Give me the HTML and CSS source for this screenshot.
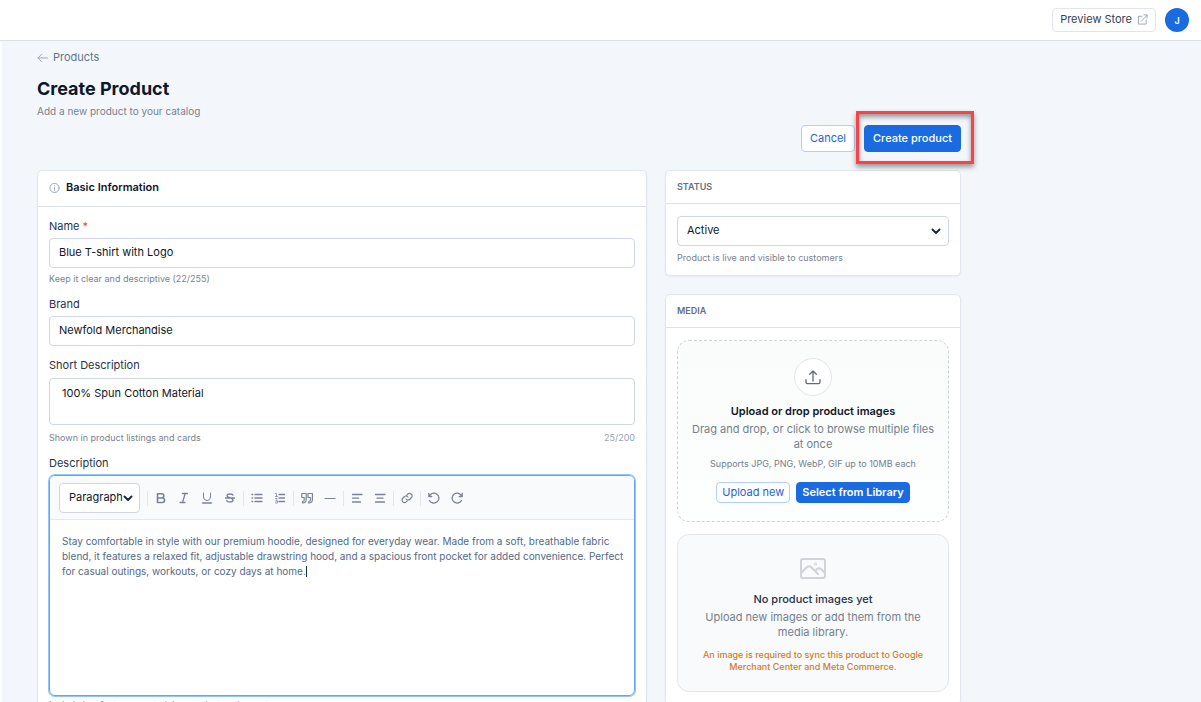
FILE: index.html
```html
<!DOCTYPE html>
<html lang="en">
<head>
<meta charset="utf-8">
<meta name="viewport" content="width=device-width, initial-scale=1">
<title>Create Product</title>
<link rel="stylesheet" href="styles.css">
</head>
<body>
<div class="app">
  <header class="topbar">
    <a class="preview" href="#">Preview Store
      <svg class="icon-sm" viewBox="0 0 24 24"><path d="M11 5H3v17h17v-9M9 16 22 3M15 2h7v7"/></svg>
    </a>
    <button class="avatar" type="button" aria-label="Account">J</button>
  </header>

  <main class="page">
    <div class="content">
      <a class="back" href="#">
        <svg class="icon-sm" viewBox="0 0 24 24"><path d="M23 13H2M10 5l-8 8 8 8"/></svg>
        Products
      </a>
      <h1 class="title">Create Product</h1>
      <p class="subtitle">Add a new product to your catalog</p>

      <div class="actions">
        <button class="btn btn-outline" type="button">Cancel</button>
        <span class="highlight"><button class="btn btn-primary" type="submit">Create product</button></span>
      </div>

      <div class="columns">
        <section class="card">
          <div class="card-head card-head-main">
            <svg class="icon-sm" viewBox="0 0 24 24"><circle cx="12" cy="13" r="10"/><path d="M12 12v6M12 8v.500"/></svg>
            <h2 class="card-title">Basic Information</h2>
          </div>
          <div class="card-body">
            <div class="field">
              <label class="label" for="name">Name <span class="required">*</span></label>
              <input class="control" id="name" type="text" value="Blue T-shirt with Logo">
              <p class="hint">Keep it clear and descriptive (22/255)</p>
            </div>
            <div class="field">
              <label class="label" for="brand">Brand</label>
              <input class="control" id="brand" type="text" value="Newfold Merchandise">
            </div>
            <div class="field">
              <label class="label" for="short">Short Description</label>
              <textarea class="control control-area" id="short">100% Spun Cotton Material</textarea>
              <div class="hint hint-row"><span>Shown in product listings and cards</span><span class="count">25/200</span></div>
            </div>
            <div class="field">
              <span class="label" id="description-label">Description</span>
              <div class="editor">
                <div class="toolbar">
                  <div class="select-wrap select-format">
                    <select class="control select" aria-label="Text style"><option>Paragraph</option></select>
                    <svg class="chevron" viewBox="0 0 10 10"><path d="M1.500 3.500 5 7l3.500-3.500"/></svg>
                  </div>
                  <span class="sep"></span>
                  <button class="tool" type="button" aria-label="Bold"><svg viewBox="0 0 12 12"><path stroke-width="1.600" d="M2.500 1.700h4.200a2.100 2.100 0 0 1 0 4.300H2.500zM2.500 6h4.800a2.200 2.200 0 0 1 0 4.500H2.500z"/></svg></button>
                  <button class="tool" type="button" aria-label="Italic"><svg viewBox="0 0 12 12"><path stroke-width="1.300" d="M4.500 1.500h5M2 10.500h5M7.200 1.500l-2.700 9"/></svg></button>
                  <button class="tool" type="button" aria-label="Underline"><svg viewBox="0 0 12 12"><path d="M2.500 1v4a3.500 3.500 0 0 0 7 0V1"/><path stroke-width="1.300" d="M1.500 11h9"/></svg></button>
                  <button class="tool" type="button" aria-label="Strikethrough"><svg viewBox="0 0 12 12"><path stroke-width="1.300" d="M9 3.200C8.500 1.500 3 1.500 3 3.800 3 6 9 5.500 9 8.200 9 10.500 3 10.500 2.800 8.500M1.500 6h9"/></svg></button>
                  <span class="sep"></span>
                  <button class="tool" type="button" aria-label="Bulleted list"><svg viewBox="0 0 12 12"><path stroke-width="1.400" d="M4 2.500h7M4 6h7M4 9.500h7M1 2.500h.6M1 6h.6M1 9.500h.6"/></svg></button>
                  <button class="tool" type="button" aria-label="Numbered list"><svg viewBox="0 0 12 12"><path stroke-width="1.300" d="M5 2.500h5.500M5 6h5.500M5 9.500h5.500"/><path stroke-width=".8" d="M1.500 1.500h1v3M1.500 4.500h2M1.500 6.500h1.500v1.200L1.500 9h2M1.500 11h2V9.500"/></svg></button>
                  <span class="sep"></span>
                  <button class="tool" type="button" aria-label="Quote"><svg viewBox="0 0 12 12"><path stroke-width="1.200" d="M5.200 1.500H.8v4h2.400V8c0 1-.6 1.500-1.700 1.500V11c2.500 0 3.700-1.200 3.700-3.500zM11.400 1.500H7v4h2.400V8c0 1-.6 1.500-1.700 1.500V11c2.500 0 3.700-1.200 3.700-3.500z"/></svg></button>
                  <button class="tool" type="button" aria-label="Divider"><svg viewBox="0 0 12 12"><path stroke-width="1.200" d="M1 6.500h10"/></svg></button>
                  <span class="sep"></span>
                  <button class="tool" type="button" aria-label="Align left"><svg viewBox="0 0 12 12"><path stroke-width="1.300" d="M1.500 2.500h9.500M1.500 6.200h6M1.500 10h8"/></svg></button>
                  <button class="tool" type="button" aria-label="Align center"><svg viewBox="0 0 12 12"><path stroke-width="1.300" d="M1.500 2.500h9.500M3 6.200h6M1.500 10h9"/></svg></button>
                  <span class="sep"></span>
                  <button class="tool" type="button" aria-label="Link"><svg viewBox="0 0 24 24"><path stroke-width="2.400" d="M10 14a5 5 0 0 0 7.500.5l3-3a5 5 0 0 0-7.100-7.100l-1.700 1.700M14 10a5 5 0 0 0-7.500-.5l-3 3a5 5 0 0 0 7.100 7.100l1.700-1.700"/></svg></button>
                  <span class="sep"></span>
                  <button class="tool" type="button" aria-label="Undo"><svg viewBox="0 0 12 12"><path stroke-width="1.300" d="M.8 1.500v3h3M1.200 4.300A5 5 0 1 1 1.500 8.500"/></svg></button>
                  <button class="tool" type="button" aria-label="Redo"><svg viewBox="0 0 12 12"><path stroke-width="1.300" d="M11.200 1.500v3h-3M10.800 4.300A5 5 0 1 0 10.500 8.500"/></svg></button>
                </div>
                <div class="editable" contenteditable="true" role="textbox" aria-multiline="true" aria-labelledby="description-label">Stay comfortable in style with our premium hoodie, designed for everyday wear. Made from a soft, breathable fabric blend, it features a relaxed fit, adjustable drawstring hood, and a spacious front pocket for added convenience. Perfect for casual outings, workouts, or cozy days at home.<span class="caret"></span></div>
              </div>
              <p class="hint hint-editor">Include key features, materials, care instructions, etc.</p>
            </div>
          </div>
        </section>

        <aside class="side">
          <section class="card">
            <div class="card-head"><h2 class="eyebrow"><label for="status">STATUS</label></h2></div>
            <div class="card-body card-body-status">
              <div class="select-wrap">
                <select class="control select" id="status"><option>Active</option></select>
                <svg class="chevron" viewBox="0 0 10 10"><path d="M1.500 3.500 5 7l3.500-3.500"/></svg>
              </div>
              <p class="hint hint-status">Product is live and visible to customers</p>
            </div>
          </section>

          <section class="card">
            <div class="card-head"><h2 class="eyebrow">MEDIA</h2></div>
            <div class="card-body media">
              <div class="panel dropzone">
                <span class="upload-mark"><svg viewBox="0 0 24 24"><path d="M12 18V3M7 8l5-5 5 5M1.500 16v4a2 2 0 0 0 2 2h17a2 2 0 0 0 2-2v-4"/></svg></span>
                <h3 class="panel-title">Upload or drop product images</h3>
                <p class="panel-text">Drag and drop, or click to browse multiple files at once</p>
                <p class="panel-note">Supports JPG, PNG, WebP, GIF up to 10MB each</p>
                <div class="panel-actions">
                  <button class="btn btn-outline btn-small" type="button">Upload new</button>
                  <button class="btn btn-primary btn-small btn-strong" type="button">Select from Library</button>
                </div>
              </div>
              <div class="panel empty">
                <svg class="picture" viewBox="0 0 26 21"><rect x="1" y="1" width="24" height="19" rx="2"/><path d="m1 15 6-6q2-1.500 4 0l7 7M15 13l2-2q2-1.500 4 0l4 4"/><circle cx="15.500" cy="6" r=".5"/></svg>
                <h3 class="panel-title panel-title-soft">No product images yet</h3>
                <p class="panel-text">Upload new images or add them from the media library.</p>
                <p class="warning">An image is required to sync this product to Google Merchant Center and Meta Commerce.</p>
              </div>
            </div>
          </section>
        </aside>
      </div>
    </div>
  </main>
</div>
</body>
</html>
```

FILE: styles.css
```css
* { box-sizing: border-box; }
body, h1, h2, h3, p { margin: 0; }
body {
  font: 11px/15px Inter, "Liberation Sans", sans-serif;
  color: #0f172a;
  background: #fff;
}
button, input, select, textarea { font: inherit; color: inherit; }
button { cursor: pointer; padding: 0; }
a { text-decoration: none; color: inherit; }
svg {
  fill: none;
  stroke: currentColor;
  stroke-linecap: round;
  stroke-linejoin: round;
  flex: none;
}

.app { height: 100vh; display: flex; flex-direction: column; }
.topbar {
  flex: none;
  display: flex;
  align-items: center;
  justify-content: flex-end;
  gap: 9px;
  padding: 8px 12px;
  border-bottom: 1px solid #dbe0ea;
  box-shadow: 0 1px 2px rgba(15, 23, 42, .05);
}
.preview {
  display: flex;
  align-items: center;
  gap: 5px;
  height: 24px;
  padding: 0 7px 1px;
  border: 1px solid #e2e5f0;
  border-radius: 4px;
  color: #334155;
}
.icon-sm { width: 11px; height: 11px; stroke-width: 2; color: #94a3b8; }
.avatar {
  width: 24px;
  height: 24px;
  border: 0;
  border-radius: 50%;
  background: #1a6be0;
  color: #fff;
  font-size: 9px;
  font-weight: 600;
}

.page {
  flex: 1;
  min-height: 0;
  overflow: hidden;
  margin-left: 2px;
  padding: 9px 35px 0;
  background: #f3f7fc;
}
.content { max-width: 924px; }
.back { display: inline-flex; align-items: center; gap: 5px; color: #64748b; }
.title { margin-top: 10px; font-size: 18px; line-height: 24px; font-weight: 700; }
.subtitle { margin-top: 3px; font-size: 10px; color: #7a818c; }
.actions { display: flex; justify-content: flex-end; gap: 9px; margin-top: 6px; }
.btn {
  height: 27px;
  padding: 0 8px;
  border: 1px solid #1a6be0;
  border-radius: 4px;
  font-weight: 500;
}
.btn-outline { background: #fff; border-color: #b3cffb; color: #2563cf; font-weight: 400; }
.btn-primary { background: #1a6be0; color: #fff; }
.btn-small { height: 21px; padding: 0 5px; line-height: 13px; }
.btn-strong { font-weight: 600; }
.highlight { position: relative; }
.highlight::after {
  content: "";
  position: absolute;
  inset: -14px -13px -12px -8px;
  border: 3px solid #fb4347;
  box-shadow: 0 3px 5px rgba(0, 0, 0, .4), inset 0 3px 5px rgba(0, 0, 0, .4);
  pointer-events: none;
}

.columns {
  display: grid;
  grid-template-columns: minmax(0, 1fr) 296px;
  gap: 18px;
  margin-top: 18px;
}
.side { display: flex; flex-direction: column; gap: 18px; }
.card {
  background: #fff;
  border: 1px solid #e2e6f0;
  border-radius: 5px;
  box-shadow: 0 1px 2px rgba(15, 23, 42, .05);
}
.card-head {
  display: flex;
  align-items: center;
  gap: 6px;
  height: 33px;
  padding: 0 11px 2px;
  border-bottom: 1px solid #dde2ec;
}
.card-head-main { height: 36px; }
.card-title { font-size: 11px; font-weight: 600; }
.eyebrow { font-size: 9px; font-weight: 600; color: #64707d; }
.card-body { padding: 12px 11px; }
.card-body-status { padding-bottom: 11px; }

.field { display: flex; flex-direction: column; margin-bottom: 12px; }
.label { margin-bottom: 4px; color: #263449; }
.required { color: #ef4444; }
.control {
  width: 100%;
  height: 30px;
  padding: 0 9px 2px;
  border: 1px solid #d1d5e8;
  border-radius: 4px;
  background: #fff;
  outline: 0;
}
.control-area { display: block; height: 47px; padding: 7px 12px; resize: none; overflow: hidden; margin-top: 1px; }
.hint { margin-top: 5px; font-size: 9px; line-height: 12px; color: #7a828f; }
.hint-row { display: flex; justify-content: space-between; margin-top: 7px; }
.hint-editor { margin-top: 3px; }
.hint-status { margin-top: 6px; }
.count { color: #94a3b8; }

.select-wrap { position: relative; }
.select { appearance: none; display: block; }
.select-format { width: 81px; margin-right: 5px; }
.chevron {
  position: absolute;
  right: 8px;
  top: 10px;
  width: 10px;
  height: 10px;
  stroke-width: 2;
  color: #1f2937;
  pointer-events: none;
}
.select-format .chevron { right: 7px; }
.editor {
  border: 1px solid #60a5fa;
  border-radius: 6px;
  box-shadow: 0 0 0 1px #93c5fd;
  overflow: hidden;
}
.toolbar {
  display: flex;
  align-items: center;
  padding: 7px 9px 6px;
  background: #f9fafc;
  border-bottom: 1px solid #e5e7eb;
}
.sep { width: 1px; height: 15px; margin: 0 1px 0 2px; background: #e2e5ea; }
.tool {
  display: flex;
  align-items: center;
  justify-content: center;
  width: 23px;
  height: 24px;
  border: 0;
  background: none;
  color: #7b8494;
}
.tool svg { width: 12px; height: 12px; }
.editable { height: 175px; padding: 14px 6px 14px 12px; font-size: 10px; color: #526a86; outline: 0; }
.caret { display: inline-block; width: 1px; height: 11px; background: #0f2f57; vertical-align: -2px; }

.media { display: flex; flex-direction: column; gap: 12px; }
.panel {
  display: flex;
  flex-direction: column;
  align-items: center;
  text-align: center;
  border: 1px solid #e2e5ea;
  border-radius: 12px;
  background: #f9fafc;
}
.dropzone { padding: 17px 12px 18px; border: 1px dashed #cfd3d8; background: linear-gradient(#fafbfb, #fdfefe); }
.upload-mark {
  display: grid;
  place-items: center;
  width: 38px;
  height: 38px;
  border: 1px solid #e2e5ea;
  border-radius: 50%;
  background: #fff;
  color: #646c7a;
}
.upload-mark svg { width: 16px; height: 16px; stroke-width: 2; }
.panel-title { margin-top: 8px; font-size: 11px; font-weight: 600; }
.panel-title-soft { font-weight: 500; color: #263449; margin-top: 13px; }
.panel-text { margin-top: 3px; color: #74808c; }
.panel-note { margin-top: 6px; font-size: 9px; line-height: 12px; color: #74808c; }
.panel-actions { display: flex; gap: 6px; margin-top: 12px; }
.empty { padding: 23px 18px 18px; }
.picture { width: 26px; height: 21px; stroke-width: 2; color: #cfd3da; }
.warning { margin-top: 9px; font-size: 9px; line-height: 12px; font-weight: 500; color: #d57a1b; }
```
